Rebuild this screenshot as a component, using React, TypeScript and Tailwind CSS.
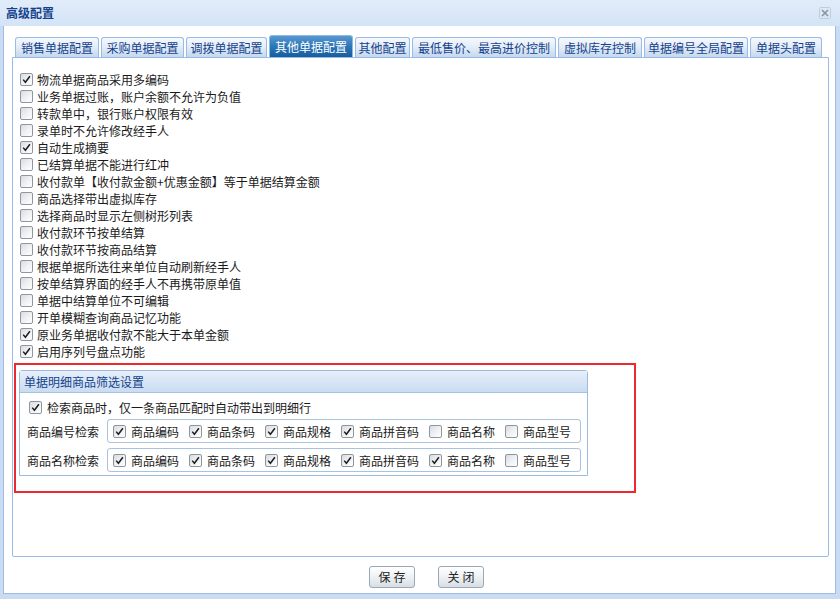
import React from "react";

function Box({ checked }: { checked?: boolean }) {
  return (
    <span className="inline-flex h-[13px] w-[13px] shrink-0 items-center justify-center rounded-[2px] border border-[#8c97a3] bg-gradient-to-br from-[#d9dcdf] via-[#eef0f1] to-[#ffffff]">
      {checked && (
        <svg width="9" height="9" viewBox="0 0 9 9">
          <path d="M1.2 4.6 L3.4 7.3 L7.9 1.2" fill="none" stroke="#1c1c1c" strokeWidth="1.5" />
        </svg>
      )}
    </span>
  );
}

const rows: [string, boolean][] = [
  ["物流单据商品采用多编码", true],
  ["业务单据过账，账户余额不允许为负值", false],
  ["转款单中，银行账户权限有效", false],
  ["录单时不允许修改经手人", false],
  ["自动生成摘要", true],
  ["已结算单据不能进行红冲", false],
  ["收付款单【收付款金额+优惠金额】等于单据结算金额", false],
  ["商品选择带出虚拟库存", false],
  ["选择商品时显示左侧树形列表", false],
  ["收付款环节按单结算", false],
  ["收付款环节按商品结算", false],
  ["根据单据所选往来单位自动刷新经手人", false],
  ["按单结算界面的经手人不再携带原单值", false],
  ["单据中结算单位不可编辑", false],
  ["开单模糊查询商品记忆功能", false],
  ["原业务单据收付款不能大于本单金额", true],
  ["启用序列号盘点功能", true],
];

const tabs: { label: string; w: string; active?: boolean }[] = [
  { label: "销售单据配置", w: "w-[84px]" },
  { label: "采购单据配置", w: "w-[83px]" },
  { label: "调拨单据配置", w: "w-[81px]" },
  { label: "其他单据配置", w: "w-[84px]", active: true },
  { label: "其他配置", w: "w-[55px]" },
  { label: "最低售价、最高进价控制", w: "w-[144px]" },
  { label: "虚拟库存控制", w: "w-[84px]" },
  { label: "单据编号全局配置", w: "w-[104px]" },
  { label: "单据头配置", w: "w-[72px]" },
];

const row1: [string, boolean][] = [
  ["商品编码", true],
  ["商品条码", true],
  ["商品规格", true],
  ["商品拼音码", true],
  ["商品名称", false],
  ["商品型号", false],
];
const row2: [string, boolean][] = [
  ["商品编码", true],
  ["商品条码", true],
  ["商品规格", true],
  ["商品拼音码", true],
  ["商品名称", true],
  ["商品型号", false],
];

function Group({ label, items }: { label: string; items: [string, boolean][] }) {
  return (
    <div className="flex items-center">
      <span className="w-[80px] shrink-0 leading-[17px] text-[#1a1a1a]">{label}</span>
      <div className="flex h-[24px] w-[474px] items-center gap-[10px] rounded-[3px] border border-[#a9c2de] pl-[5px]">
        {items.map(([t, c], i) => (
          <label key={i} className="flex items-center gap-[5px]">
            <Box checked={c} />
            <span className="leading-[17px] text-[#1a1a1a]">{t}</span>
          </label>
        ))}
      </div>
    </div>
  );
}

export default function App() {
  return (
    <div className="flex h-[599px] w-[840px] flex-col overflow-hidden bg-[#c9dcf3] font-['Noto_Sans_CJK_SC','Noto_Sans',sans-serif] text-[12px]">
      {/* title bar */}
      <div className="flex h-[26px] shrink-0 items-center justify-between bg-gradient-to-b from-[#e1ecf9] to-[#d3e4f7] pl-[6px] pr-[9px]">
        <span className="font-bold leading-[16px] text-[#15428b]">高级配置</span>
        <svg width="12" height="12" viewBox="0 0 12 12">
          <rect x="0.5" y="0.5" width="11" height="11" rx="1" fill="none" stroke="#c3ccd6" />
          <path d="M3 3 L9 9 M9 3 L3 9" stroke="#8894a3" strokeWidth="1.6" />
        </svg>
      </div>

      {/* body */}
      <div className="mb-[5px] ml-[3px] mr-[4px] flex flex-1 flex-col border-x border-b border-[#9fbde3] bg-white pl-[8px] pr-[6px] pt-[9px]">
        {/* tabs */}
        <div className="flex h-[22px] items-end gap-[2px] pl-[3px]">
          {tabs.map((t) =>
            t.active ? (
              <div
                key={t.label}
                className={`${t.w} flex h-[22px] items-center justify-center rounded-t-[3px] border border-b-0 border-[#8fb9e0] bg-gradient-to-b from-[#5898d0] via-[#2a76b9] to-[#175d9c] text-white`}
              >
                <span className="leading-[16px]">{t.label}</span>
              </div>
            ) : (
              <div
                key={t.label}
                className={`${t.w} flex h-[20px] items-center justify-center rounded-t-[3px] border border-b-0 border-[#99bbe8] bg-gradient-to-b from-[#f6f9fd] via-[#e2ecf8] to-[#c4d8ee] text-[#15428b]`}
              >
                <span className="leading-[16px]">{t.label}</span>
              </div>
            )
          )}
        </div>

        {/* panel */}
        <div className="flex h-[500px] w-[817px] flex-col rounded-b-[2px] border border-[#99bbe8] pt-[13px]">
          <div className="flex flex-col pl-[7px]">
            {rows.map(([t, c], i) => (
              <label key={i} className="flex h-[17px] items-center gap-[4px]">
                <Box checked={c} />
                <span className="leading-[17px] text-[#1a1a1a]">{t}</span>
              </label>
            ))}
          </div>

          {/* red highlight */}
          <div className="ml-[1px] mt-[3px] h-[130px] w-[622px] border-2 border-[#ec2a2d] pl-[3px] pt-[5px]">
            <div className="flex h-[106px] w-[569px] flex-col rounded-t-[3px] border border-[#9ebbde]">
              <div className="flex h-[22px] shrink-0 items-center border-b border-[#a6c2e3] bg-gradient-to-b from-[#e6effa] to-[#cadcf2] pl-[4px]">
                <span className="leading-[16px] text-[#15428b]">单据明细商品筛选设置</span>
              </div>
              <div className="flex flex-col pl-[7px] pt-[6px]">
                <label className="ml-[2px] flex h-[17px] items-center gap-[5px]">
                  <Box checked />
                  <span className="leading-[17px] text-[#1a1a1a]">检索商品时，仅一条商品匹配时自动带出到明细行</span>
                </label>
                <div className="mt-[3px]">
                  <Group label="商品编号检索" items={row1} />
                </div>
                <div className="mt-[5px]">
                  <Group label="商品名称检索" items={row2} />
                </div>
              </div>
            </div>
          </div>
        </div>

        {/* buttons */}
        <div className="mt-[9px] flex justify-center gap-[23px] pl-[12px]">
          <button className="flex h-[22px] w-[46px] items-center justify-center rounded-[3px] border border-[#9aa8b8] bg-gradient-to-b from-[#ffffff] via-[#eef1f4] to-[#d8dee5] tracking-[3px] text-[#222] pl-[3px]">
            保存
          </button>
          <button className="flex h-[22px] w-[46px] items-center justify-center rounded-[3px] border border-[#9aa8b8] bg-gradient-to-b from-[#ffffff] via-[#eef1f4] to-[#d8dee5] tracking-[3px] text-[#222] pl-[3px]">
            关闭
          </button>
        </div>
      </div>
    </div>
  );
}
